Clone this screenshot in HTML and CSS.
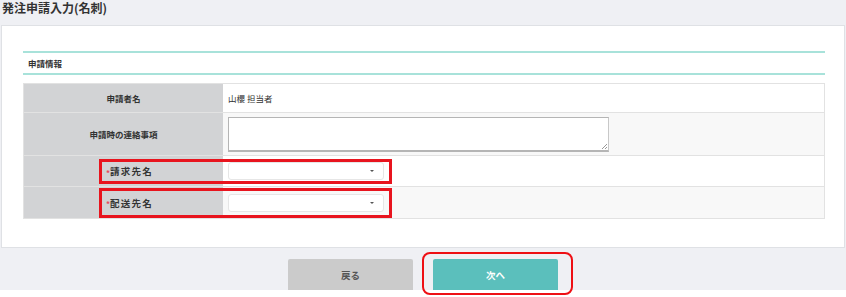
FILE: index.html
```html
<!DOCTYPE html>
<html lang="ja">
<head>
<meta charset="utf-8">
<link rel="stylesheet" href="styles.css">
</head>
<body>
<div class="page">
  <h1 class="title">発注申請入力(名刺)</h1>
  <div class="panel">
    <div class="section-head">申請情報</div>
    <div class="form">
      <div class="row">
        <div class="label">申請者名</div>
        <div class="value">山櫻 担当者</div>
      </div>
      <div class="row alt">
        <div class="label">申請時の連絡事項</div>
        <div class="value"><div class="textarea"><span class="grip"></span></div></div>
      </div>
      <div class="row">
        <div class="label req"><span class="star">*</span>請求先名</div>
        <div class="value"><div class="select"><span class="arrow"></span></div></div>
        <div class="mark mark1"></div>
      </div>
      <div class="row alt">
        <div class="label req"><span class="star">*</span>配送先名</div>
        <div class="value"><div class="select"><span class="arrow"></span></div></div>
        <div class="mark mark2"></div>
      </div>
    </div>
  </div>
  <div class="actions">
    <div class="btn back">戻る</div>
    <div class="btn-wrap">
      <div class="btn next">次へ</div>
      <div class="mark-round"></div>
    </div>
  </div>
</div>
</body>
</html>
```

FILE: styles.css
```css
* { box-sizing: border-box; }
html, body { margin: 0; padding: 0; background: #fff; }
body {
  font-family: "Noto Sans CJK JP", "Noto Sans", sans-serif;
  color: #333;
  width: 846px;
  height: 297px;
  overflow: hidden;
}
.page {
  background: #eff0f4;
  height: 290px;
}
.title {
  margin: 0;
  padding: 0 0 0 2px;
  height: 25px;
  font-size: 12px;
  line-height: 15px;
  font-weight: bold;
  color: #333;
}
.panel {
  margin-left: 1px;
  width: 844px;
  height: 223px;
  background: #fff;
  border: 1px solid #dfe1e5;
  padding: 25px 19px 0 21px;
}
.section-head {
  border-top: 2px solid #a8e2da;
  border-bottom: 2px solid #a8e2da;
  height: 24px;
  font-size: 8.5px;
  font-weight: bold;
  line-height: 20px;
  padding-left: 5px;
  color: #333;
}
.form {
  margin-top: 8px;
  border: 1px solid #e2e2e2;
}
.row {
  position: relative;
  display: grid;
  grid-template-columns: 199px 1fr;
  border-top: 1px solid #e2e2e2;
}
.row:first-child { border-top: none; height: 28px; }
.row:nth-child(2) { height: 43px; }
.row:nth-child(3) { height: 31px; }
.row:nth-child(4) { height: 32px; }
.label {
  background: #d2d3d5;
  font-size: 8.5px;
  font-weight: bold;
  display: flex;
  align-items: center;
  justify-content: center;
  color: #333;
}
.label.req {
  justify-content: flex-start;
  padding-left: 82px;
  font-size: 9.5px;
  letter-spacing: 1.2px;
}
.star { color: #e84a5a; font-size: 8px; position: relative; top: 1px; letter-spacing: 0; }
.value {
  background: #fff;
  display: flex;
  align-items: center;
  padding-left: 5px;
  font-size: 8.5px;
}
.alt .value { background: #f8f8f8; }
.textarea {
  position: relative;
  width: 381px;
  height: 35px;
  background: #fff;
  border: 1px solid #b5b5b5;
  border-bottom-width: 2px;
  border-right-color: #c8c8c8;
}
.grip {
  position: absolute;
  right: 1px;
  bottom: 1px;
  width: 5px;
  height: 5px;
  background: linear-gradient(135deg, transparent 45%, #999 45%, #999 55%, transparent 55%, transparent 70%, #999 70%, #999 80%, transparent 80%);
}
.select {
  position: relative;
  width: 156px;
  height: 18px;
  background: #fff;
  border: 1px solid #e6e6e6;
  border-radius: 3px;
}
.arrow {
  position: absolute;
  right: 9px;
  top: 7px;
  border-left: 2px solid transparent;
  border-right: 2px solid transparent;
  border-top: 2px solid #555;
}
.mark {
  position: absolute;
  left: 75px;
  width: 293px;
  border: 3px solid #e8141e;
}
.mark1 { top: 3px; height: 25px; }
.mark2 { top: 1px; height: 30px; }
.actions {
  display: flex;
  justify-content: center;
  gap: 20px;
  padding-top: 11px;
}
.btn {
  width: 125px;
  height: 31px;
  border-radius: 2px 2px 0 0;
  display: flex;
  align-items: center;
  justify-content: center;
  font-size: 9.5px;
  font-weight: bold;
}
.back { background: #cbcbcb; color: #555; }
.next { background: #5bbfbc; color: #fff; }
.btn-wrap { position: relative; }
.mark-round {
  position: absolute;
  left: -11px;
  top: -7px;
  width: 151px;
  height: 43px;
  border: 2px solid #ee0f14;
  border-radius: 8px;
}
```
